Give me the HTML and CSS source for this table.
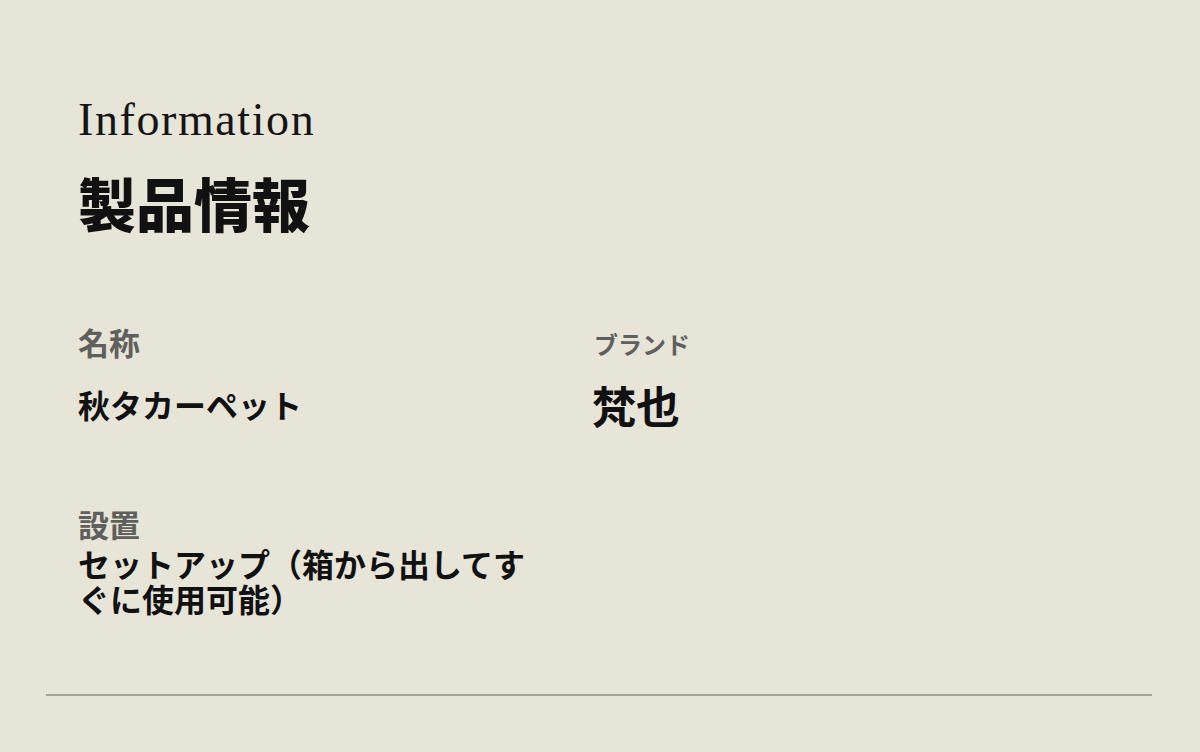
FILE: index.html
```html
<!DOCTYPE html>
<html lang="ja">
<head>
<meta charset="utf-8">
<link rel="stylesheet" href="styles.css">
</head>
<body>
<section class="info">
  <header class="head">
    <p class="eyebrow">Information</p>
    <h1 class="title">製品情報</h1>
  </header>
  <dl class="specs">
    <div class="item">
      <dt class="label">名称</dt>
      <dd class="value">秋タカーペット</dd>
    </div>
    <div class="item">
      <dt class="label label-sm">ブランド</dt>
      <dd class="value value-lg">梵也</dd>
    </div>
    <div class="item">
      <dt class="label">設置</dt>
      <dd class="value value-wrap">セットアップ（箱から出してすぐに使用可能）</dd>
    </div>
  </dl>
</section>
<hr class="rule">
</body>
</html>
```
FILE: styles.css
```css
html, body {
  margin: 0;
  padding: 0;
  background: #e7e4d8;
}
body {
  width: 1200px;
  height: 752px;
  overflow: hidden;
  font-family: "Noto Sans CJK JP", "Noto Sans", sans-serif;
  color: #111;
}
.info {
  padding: 94px 0 0 78px;
  height: 694px;
  box-sizing: border-box;
}
.head {
  display: flex;
  flex-direction: column;
}
.eyebrow {
  margin: 0;
  font-family: "Liberation Serif", "DejaVu Serif", serif;
  font-size: 46px;
  letter-spacing: 1.6px;
  line-height: 52px;
  font-weight: 400;
  color: #151515;
}
.title {
  margin: 18px 0 0 0;
  font-size: 58px;
  line-height: 76px;
  font-weight: 900;
  letter-spacing: 0;
}
.specs {
  margin: 80px 0 0 0;
  display: grid;
  grid-template-columns: 466px 466px;
  column-gap: 48px;
  row-gap: 73px;
  align-items: start;
}
.item {
  display: flex;
  flex-direction: column;
}
.label {
  font-size: 31px;
  line-height: 40px;
  padding-top: 2px;
  font-weight: 700;
  color: #5f5f5d;
}
.label-sm {
  font-size: 24px;
  line-height: 48px;
  padding-top: 0;
  padding-left: 2px;
}
.value {
  margin: 22px 0 0 0;
  font-size: 32px;
  line-height: 40px;
  font-weight: 700;
}
.value-lg {
  font-size: 44px;
  line-height: 48px;
  margin-top: 13px;
}
.value-wrap {
  margin-top: 2px;
  line-height: 35px;
}
.rule {
  margin: 0 0 0 46px;
  width: 1106px;
  height: 2px;
  border: 0;
  background: #a3a396;
}
```
